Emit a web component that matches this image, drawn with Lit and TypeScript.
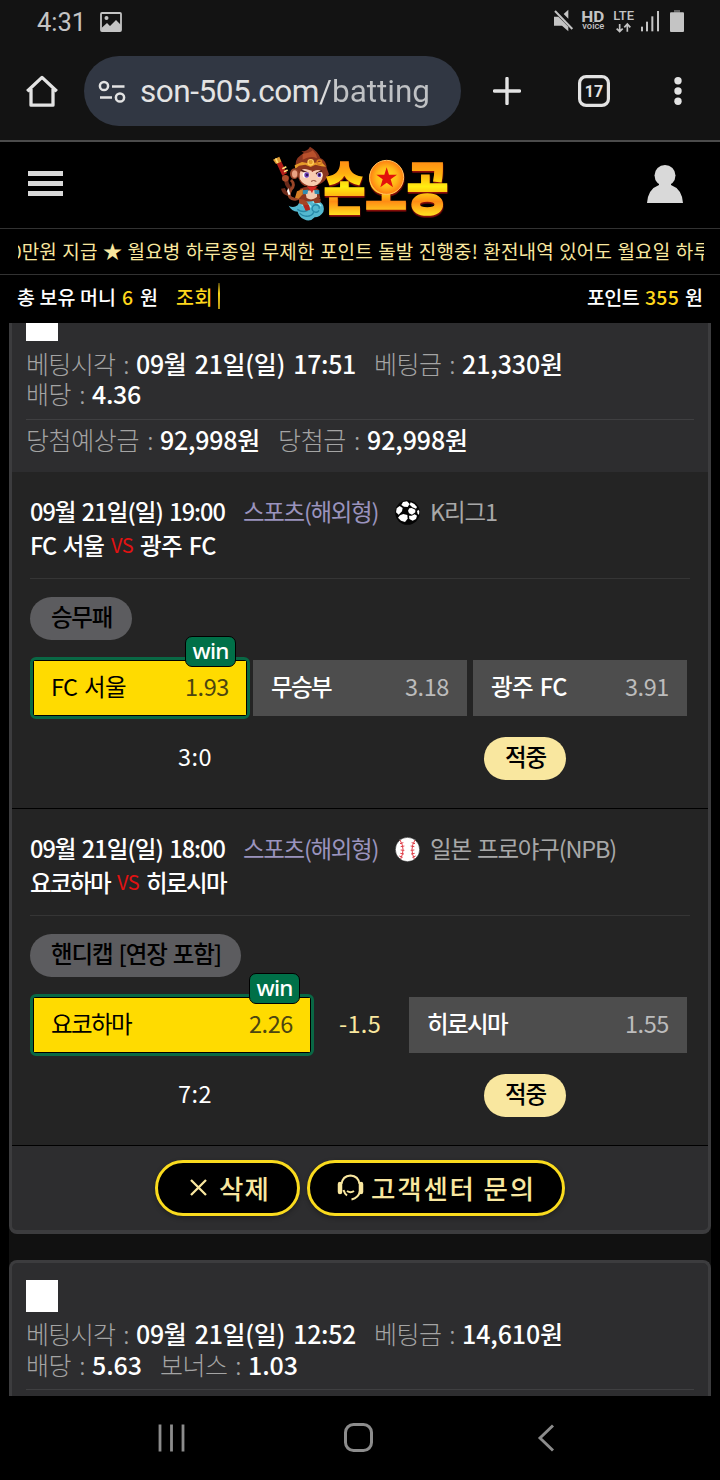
import { LitElement, html, css, svg } from "lit";
import { customElement, property } from "lit/decorators.js";

/** Text run whose tracking is tuned so that it fills a given measure. */
@customElement("fit-text")
class FitText extends LitElement {
  @property({ type: Number }) w = 0;
  @property() text = "";
  static styles = css`
    :host { display: block; flex: none; white-space: pre; }
    span { display: inline-block; }
  `;
  render() {
    return html`<span>${this.text}</span>`;
  }
  updated() {
    const span = this.renderRoot.querySelector("span") as HTMLElement;
    span.style.letterSpacing = "0px";
    const natural = span.getBoundingClientRect().width;
    span.style.letterSpacing = `${(this.w - natural) / this.text.length}px`;
    this.style.width = `${this.w}px`;
  }
}

type Run = [string, number];
const run = (r: Run, cls = "") => html`<fit-text class=${cls} .text=${r[0]} .w=${r[1]}></fit-text>`;

interface Field { label: Run; value: Run }
interface Pick { name: Run; odds: string; win?: boolean }
interface Match {
  date: Run; kind: Run; sport: "soccer" | "baseball"; league: Run;
  home: Run; away: Run; market: Run; picks: (Pick | string)[]; score: string;
}

const soccer = svg`<svg width="25" height="25" viewBox="0 0 75 75">
  <circle cx="37.500" cy="37.500" r="37" fill="#050505"/>
  <path d="M24 6L36 4L44 12L38 21L27 20L19 15Z" fill="#fff"/>
  <path d="M47 7L58 12L66 21L63 26L52 22L44 14Z" fill="#fff"/>
  <path d="M5 25L14 18L23 24L21 34L11 44L3 37Z" fill="#fff"/>
  <path d="M43 25L50 24L61 29L61 37L51 44L42 40L39 32Z" fill="#fff"/>
  <path d="M15 46L25 42L37 45L38 56L30 66L18 62L9 53Z" fill="#fff"/>
  <path d="M42 47L50 47L59 43L66 47L63 57L53 62L43 57Z" fill="#fff"/>
  <path d="M70 29L73 34L72 44L68 42L66 34Z" fill="#fff"/>
</svg>`;

const baseball = svg`<svg width="25" height="25" viewBox="0 0 75 75">
  <circle cx="37.500" cy="37.500" r="36.500" fill="#fff" stroke="#111" stroke-width="1.500"/>
  <g fill="none" stroke="#e0404a" stroke-width="3">
    <path d="M15 9Q32 36 17 66"/><path d="M60 9Q43 36 58 66"/>
    <path d="M15 20L25 17M17 29L28 27M17 39L28 40M16 49L27 51M13 57L23 61"/>
    <path d="M60 20L50 17M58 29L47 27M58 39L47 40M59 49L48 51M62 57L52 61"/>
  </g>
</svg>`;

const logo = svg`<svg class="logo" width="180" height="80" viewBox="30 15 540 240">
  <defs>
    <linearGradient id="fire" x1="0" y1="60" x2="0" y2="226" gradientUnits="userSpaceOnUse">
      <stop offset="0" stop-color="#ff8a14"/><stop offset=".25" stop-color="#ffae10"/>
      <stop offset=".48" stop-color="#ffee10"/><stop offset=".62" stop-color="#ffc010"/>
      <stop offset=".75" stop-color="#ff8c14"/><stop offset="1" stop-color="#ffe020"/>
    </linearGradient>
    <radialGradient id="sun"><stop offset="0" stop-color="#ffe81a"/><stop offset=".6" stop-color="#ffb818"/><stop offset="1" stop-color="#ff7d12"/></radialGradient>
  </defs>
  <!-- cloud -->
  <path d="M86 197Q100 205 113 196Q120 180 142 183Q165 174 181 186Q196 197 190 216Q180 232 164 232Q150 248 132 238Q116 230 113 215Q94 213 86 197Z" fill="#54b8cf"/>
  <path d="M112 208Q128 219 143 211M137 229Q156 230 161 217M177 211A11 11 0 1 1 171 195Q180 198 177 206M119 220Q129 230 140 228" fill="none" stroke="#2689a8" stroke-width="4"/>
  <path d="M125 196Q145 186 153 202M158 186Q177 186 183 199" fill="none" stroke="#a0edf4" stroke-width="4"/>
  <!-- staff, tail and arm -->
  <path d="M45 60L60 57L81 99L67 107Z" fill="#b21c18"/><path d="M39 59L58 50L64 65L48 72Z" fill="#df9a32"/>
  <path d="M47 55L53 69M67 86L79 80M72 95L83 90" stroke="#ffe17a" stroke-width="5"/>
  <path d="M82 108Q75 126 85 139Q95 151 82 161Q72 158 69 145" fill="none" stroke="#6b2a1a" stroke-width="12"/>
  <path d="M93 120Q108 134 92 150Q80 172 101 177Q112 179 118 171" fill="none" stroke="#994527" stroke-width="9"/>
  <circle cx="76" cy="115" r="10" fill="#a94b29"/>
  <path d="M85 144L91 163L86 166L81 153Z" fill="#fff"/>
  <!-- body -->
  <path d="M120 146Q144 134 175 147L181 175Q160 188 128 183L114 170Z" fill="#8b361f"/>
  <path d="M111 154L129 147L128 163L116 176L105 173Z" fill="#d58025"/>
  <path d="M135 152L171 150L171 171Q155 184 140 174Z" fill="#f2c9ae"/>
  <path d="M128 151L145 149L142 162L129 163ZM163 150L178 151L178 163L164 161Z" fill="#318db1"/>
  <path d="M140 139L174 139L160 150L156 160L150 149Z" fill="#d92722"/>
  <path d="M117 176Q145 175 149 207L137 210L129 194L117 190Z" fill="#a64424"/>
  <path d="M130 196L147 195L150 210L137 212Z" fill="#b4241c"/>
  <path d="M158 178L182 176L181 188L164 190Z" fill="#913a20"/>
  <!-- head -->
  <path d="M109 91Q100 60 122 46L132 39L124 34Q143 34 150 20Q174 34 181 54Q199 62 200 84L207 103L194 122Q170 144 134 138Q116 131 109 91Z" fill="#8a351e"/>
  <path d="M128 41Q150 40 158 31Q170 42 171 55Q151 45 128 59Z" fill="#b9502b"/>
  <ellipse cx="103" cy="101" rx="13" ry="16" fill="#9b482c"/><ellipse cx="104" cy="102" rx="8" ry="11" fill="#e9a384"/>
  <path d="M119 101Q123 81 145 89L160 94Q184 82 189 105Q186 132 161 138Q130 139 119 116Z" fill="#f8cdb1"/>
  <path d="M104 76L126 66L142 69L152 60L164 68L183 65L198 80L185 79L166 74L152 81L136 74L117 77L106 86Z" fill="#e69c2a"/>
  <circle cx="152" cy="67" r="8" fill="none" stroke="#ffce59" stroke-width="4"/><circle cx="178" cy="67" r="7" fill="none" stroke="#d67b20" stroke-width="4"/>
  <path d="M123 91L145 100M186 92L168 101" stroke="#54201b" stroke-width="5"/>
  <ellipse cx="138" cy="105" rx="10" ry="9" fill="#fff"/><ellipse cx="140" cy="105" rx="7" ry="8" fill="#6d3cae"/><circle cx="141" cy="105" r="3" fill="#1a1136"/>
  <ellipse cx="179" cy="105" rx="8" ry="8" fill="#fff"/><ellipse cx="178" cy="105" rx="6" ry="7" fill="#6d3cae"/><circle cx="178" cy="105" r="3" fill="#1a1136"/>
  <path d="M153 124Q161 119 169 124" fill="none" stroke="#8e4334" stroke-width="3"/><circle cx="157" cy="94" r="2" fill="#9b2722"/>
  <!-- wordmark -->
  <g class="word">
    <text x="191" y="206" font-size="170" textLength="374" lengthAdjust="spacingAndGlyphs" fill="url(#fire)" stroke="url(#fire)" stroke-width="5">손오공</text>
    <circle cx="380" cy="112" r="51" fill="url(#sun)" stroke="#ffc35d" stroke-width="3"/>
  </g>
  <path d="M380 82L387 104L411 104L392 118L399 142L380 128L361 142L368 118L349 104L373 104Z" fill="#e3120b"/>
</svg>`;

const statusIcons = svg`<svg width="134" height="26" viewBox="579 24 402 78">
  <g fill="#c4c4c4">
    <path d="M582 50H595L612 67L625 80V94L606 77H582ZM611 42L625 29V56Z"/>
    <path d="M585 33L637 87" stroke="#c4c4c4" stroke-width="6"/>
    <g font-family="Roboto, sans-serif">
      <text x="664" y="66" font-size="44" font-weight="700" textLength="69" lengthAdjust="spacingAndGlyphs">HD</text>
      <text x="667" y="88" font-size="25" font-weight="500" textLength="66" lengthAdjust="spacingAndGlyphs">voice</text>
      <text x="760" y="60" font-size="40" font-weight="500" textLength="62" lengthAdjust="spacingAndGlyphs">LTE</text>
    </g>
    <rect x="843" y="80" width="6" height="14"/><rect x="858" y="65" width="6" height="29"/>
    <rect x="874" y="49" width="6" height="45"/><rect x="891" y="33" width="6" height="61"/>
    <rect x="942" y="30" width="18" height="8" fill="#636363"/><rect x="930" y="37" width="42" height="59" rx="3"/>
  </g>
  <path d="M779 72V94M770 86L779 95L788 86M802 95V74M793 82L802 72L811 82" fill="none" stroke="#c4c4c4" stroke-width="5"/>
</svg>`;

const headset = svg`<svg width="27" height="27" viewBox="0 0 27 27" fill="none" stroke="#f9e79f" stroke-width="2">
  <path d="M4.500 10Q5.500 2 13.500 1.500Q21.500 2 22.500 10M23 17Q21.500 24 14.500 25.500"/>
  <path d="M3 10V18M24 10V18" stroke-width="4.500" stroke-linecap="round"/>
  <path d="M10 17Q13.500 19.500 17 17M6.500 16Q7.500 19.500 10 21.500"/>
</svg>`;

const when = (time: string): Run => [`09월 21일(일) ${time}`, 220];

const slip1: Field[][] = [
  [{ label: ["베팅시각 :", 103], value: when("17:51") }, { label: ["베팅금 :", 81], value: ["21,330원", 101] }],
  [{ label: ["배당 :", 59], value: ["4.36", 49] }],
  [{ label: ["당첨예상금 :", 127], value: ["92,998원", 100] }, { label: ["당첨금 :", 82], value: ["92,998원", 101] }],
];
const slip2: Field[][] = [
  [{ label: ["베팅시각 :", 103], value: when("12:52") }, { label: ["베팅금 :", 81], value: ["14,610원", 101] }],
  [{ label: ["배당 :", 59], value: ["5.63", 50] }, { label: ["보너스 :", 81], value: ["1.03", 50] }],
];

const matches: Match[] = [
  {
    date: ["09월 21일(일) 19:00", 195], kind: ["스포츠(해외형)", 135], sport: "soccer", league: ["K리그1", 67],
    home: ["FC 서울", 74], away: ["광주 FC", 76], market: ["승무패", 61],
    picks: [
      { name: ["FC 서울", 75], odds: "1.93", win: true },
      { name: ["무승부", 60], odds: "3.18" },
      { name: ["광주 FC", 76], odds: "3.91" },
    ],
    score: "3:0",
  },
  {
    date: ["09월 21일(일) 18:00", 195], kind: ["스포츠(해외형)", 135], sport: "baseball", league: ["일본 프로야구(NPB)", 186],
    home: ["요코하마", 80], away: ["히로시마", 80], market: ["핸디캡 [연장 포함]", 170],
    picks: [
      { name: ["요코하마", 80], odds: "2.26", win: true },
      "-1.5",
      { name: ["히로시마", 80], odds: "1.55" },
    ],
    score: "7:2",
  },
];

@customElement("app-root")
class AppRoot extends LitElement {
  static styles = css`
    :host { display: flex; flex-direction: column; width: 720px; height: 1480px; overflow: hidden; background: #000; color: #fff;
      font-family: "Noto Sans CJK KR", "Noto Sans", sans-serif; }
    * { box-sizing: border-box; }
    svg { display: block; flex: none; }
    .status { height: 43px; flex: none; background: #131313; display: flex; align-items: center; padding: 0 33px 0 37px;
      font: 25.500px/43px Roboto, sans-serif; color: #c4c4c4; }
    .status fit-text { padding-top: 1px; }
    .status .photo { margin-left: 14px; }
    .status .right { margin-left: auto; padding-bottom: 1px; }
    .browser { height: 99px; flex: none; background: #131313; border-bottom: 2px solid #4b4b4b; display: flex; align-items: center;
      padding: 0 0 1px 26px; }
    .url { width: 377px; height: 70px; margin: 0 32px 0 26px; border-radius: 35px; background: #313743; display: flex; align-items: center;
      padding-left: 14px; font: 31.500px/71px Roboto, sans-serif; color: #e3e3e3; }
    .url svg { margin-right: 14px; }
    .path { background: linear-gradient(90deg, #e3e3e3, #bfc1c4 20px); -webkit-background-clip: text; background-clip: text; color: transparent; }
    .tab { margin: 0 64px 0 57px; }
    .header { height: 86px; flex: none; display: flex; align-items: center; padding: 0 37px 0 28px; }
    .menu { width: 35px; display: grid; gap: 4.500px; padding-bottom: 3px; }
    .menu i { height: 5.500px; background: #d9d9d9; }
    .logo { margin: 0 auto 0 207px; overflow: visible; font-family: "Noto Sans CJK KR", sans-serif; font-weight: 900; }
    .word { filter: drop-shadow(1px 5px 0 #8f0d0a); }
    .user { margin-bottom: 2px; }
    .notice { height: 47px; flex: none; border: solid #323232; border-width: 1px 0; display: flex; align-items: center; padding: 0 16px 0 18px; }
    .clip { flex: 1; min-width: 0; overflow: hidden; display: flex; color: #f9e79f; font-size: 19px; line-height: 42px; padding-bottom: 2px; word-spacing: 1px; }
    .clip fit-text { margin-left: -7px; }
    .money { height: 48px; flex: none; display: flex; align-items: center; padding: 0 17px 4px 17px; font-size: 19.500px; font-weight: 500; line-height: 30px; }
    .gold { color: #ffd71c; }
    .money .num { margin: 0 6px; }
    .money .look { margin-left: 18px; }
    .bar { width: 2px; height: 26px; margin: 0 0 3px 5px; background: linear-gradient(#4b3f08, #f5cf18 40%, #b39513); }
    .points { margin-left: auto; display: flex; }
    .scroll { height: 1073px; flex: none; margin: 0 9px; overflow: hidden; background: #111; }
    .card { border: 3px solid #3c3c3e; background: #2d2d2f; border-bottom-width: 4px; }
    .card.first { border-top: 0; border-radius: 0 0 8px 8px; height: 911px; }
    .card.next { margin-top: 26px; border-radius: 8px 8px 0 0; border-bottom: 0; height: 140px; }
    .head { padding: 0 14px; }
    .card.first .head { height: 149px; }
    .box { width: 32px; height: 18px; background: #fff; }
    .next .box { height: 32px; margin-top: 17px; }
    .rows { padding: 6px 0 10px; height: 78px; border-bottom: 1px solid #3f3f41; }
    .first .rows { padding-top: 7px; height: 79px; }
    .first .rows .line { height: 30px; }
    .line { display: flex; gap: 18px; height: 30.500px; line-height: 30.500px; font-size: 25px; word-spacing: 3px; }
    .total { padding-top: 4px; }
    .field { display: flex; gap: 7px; }
    .label { color: #a4a4a4; font-weight: 300; }
    .value { font-weight: 500; }
    .match { height: 337px; background: #242424; border-bottom: 1px solid #000; padding: 22px 18px 0; font-size: 23.500px; word-spacing: 2px; }
    .info { display: flex; height: 34px; line-height: 34px; align-items: center; }
    .info svg { margin-top: 3px; }
    .strong { font-weight: 500; }
    .kind { margin: 0 17px 0 18px; color: #9a93bd; }
    .league { margin-left: 10px; color: #a8a8a8; }
    .vs { margin: 0 7px; color: #e11212; font-size: 20px; }
    .rule { height: 1px; margin: 16px 0 18px; background: #353535; }
    .pill { display: inline-flex; height: 43px; line-height: 39px; border-radius: 22px; padding: 0 20px 0 21px; background: #5c5c5f; color: #000; font-weight: 500; }
    .picks { display: grid; grid-template-columns: repeat(3, 1fr); gap: 6px; margin: 20px 3px 21px; height: 56px; }
    .picks.handicap { grid-template-columns: 278px 1fr 278px; gap: 0; }
    .pick { position: relative; display: flex; justify-content: space-between; background: #4d4d4d; line-height: 53px; padding: 0 18px; }
    .odds { color: #bcbcbc; }
    .pick.win { margin: -3px; border: 3px solid #096845; border-radius: 6px; background: #000; padding: 1px; }
    .win .face { flex: 1; display: flex; justify-content: space-between; background: #ffdb00; color: #000; padding: 0 17px; line-height: 51px; }
    .win .strong { font-weight: 400; }
    .win .odds { color: #4c4510; }
    .flag { position: absolute; right: 11px; top: -24px; width: 51px; height: 31px; border: 1px solid #000; border-radius: 7px; background: #007048;
      color: #fff; font: 500 22.500px/28px "Noto Sans", sans-serif; display: flex; justify-content: center; }
    .line15 { color: #f9e79f; line-height: 53px; display: flex; justify-content: center; }
    .result { display: grid; grid-template-columns: 1fr 1fr; justify-items: center; line-height: 39px; }
    .hit { background: #f9e79f; }
    .foot { display: flex; justify-content: center; gap: 7px; padding-top: 14px; }
    .btn { height: 56px; border: 3px solid #fadb1e; border-radius: 28px; background: #000; color: #f9e79f; display: flex; align-items: center;
      font-size: 26.500px; font-weight: 500; line-height: 46px; padding-bottom: 1px; box-shadow: 0 2px 5px rgba(0,0,0,.3); }
    .del { width: 145px; padding-left: 32px; }
    .del svg { margin-right: 12px; }
    .ask { width: 258px; padding-left: 27px; }
    .ask svg { margin-right: 7px; }
    .nav { flex: 1; display: flex; align-items: center; padding: 0 0 1px 158px; }
    .nav .h { margin: 0 164px 0 159px; }
  `;

  private line(fields: Field[]) {
    return html`<div class="line">${fields.map((f) => html`<div class="field">${run(f.label, "label")}${run(f.value, "value")}</div>`)}</div>`;
  }

  private pick(p: Pick | string) {
    if (typeof p === "string") return html`<div class="line15">${run([p, 42])}</div>`;
    const body = html`${run(p.name, "strong")}${run([p.odds, 44], "odds")}`;
    return p.win
      ? html`<div class="pick win"><div class="face">${body}</div><div class="flag">${run(["win", 36])}</div></div>`
      : html`<div class="pick">${body}</div>`;
  }

  private match(m: Match) {
    return html`<section class="match">
      <div class="info">${run(m.date, "strong")}${run(m.kind, "kind")}${m.sport === "soccer" ? soccer : baseball}${run(m.league, "league")}</div>
      <div class="info">${run(m.home, "strong")}${run(["VS", 22], "vs")}${run(m.away, "strong")}</div>
      <div class="rule"></div>
      <div class="pill">${run(m.market)}</div>
      <div class="picks ${m.picks.some((p) => typeof p === "string") ? "handicap" : ""}">${m.picks.map((p) => this.pick(p))}</div>
      <div class="result">${run([m.score, 34])}<div class="pill hit">${run(["적중", 41])}</div></div>
    </section>`;
  }

  render() {
    return html`
      <div class="status">
        ${run(["4:31", 49])}
        <svg class="photo" width="22" height="20" viewBox="0 0 22 20"><rect x="1" y="1" width="20" height="18" rx="1" fill="none" stroke="#c4c4c4" stroke-width="1.800"/><circle cx="6.500" cy="6" r="2" fill="#c4c4c4"/><path d="M1.500 16L7 11L10 14L16 8L21 13V19H1.500Z" fill="#c4c4c4"/></svg>
        <div class="right">${statusIcons}</div>
      </div>
      <div class="browser">
        <svg width="32" height="32" viewBox="0 0 32 32" fill="none" stroke="#e3e3e3" stroke-width="3.300" stroke-linejoin="round"><path d="M1.200 16.200L16 2.400L30.800 16.200M5 14V30.200H27V14"/></svg>
        <div class="url">
          <svg width="28" height="23" viewBox="0 0 28 23" fill="none" stroke="#e3e3e3" stroke-width="2.500"><circle cx="6" cy="6" r="4.100"/><circle cx="22" cy="17.500" r="4.100"/><path d="M14 6.500H26.500M2 17.500H14"/></svg>
          ${run(["son-505.com", 179])}<div class="path">${run(["/batting", 111])}</div>
        </div>
        <svg width="28" height="28" viewBox="0 0 28 28"><path d="M14 1.500V26.500M1.500 14H26.500" stroke="#e3e3e3" stroke-width="3.400" stroke-linecap="round"/></svg>
        <svg class="tab" width="32" height="32" viewBox="0 0 32 32"><rect x="1.600" y="1.600" width="28.800" height="28.800" rx="6.500" fill="none" stroke="#e3e3e3" stroke-width="3.200"/><text x="16" y="21.500" text-anchor="middle" font-family="Roboto, sans-serif" font-weight="700" font-size="16" fill="#e3e3e3">17</text></svg>
        <svg width="8" height="28" viewBox="0 0 8 28" fill="#e3e3e3"><circle cx="4" cy="3.700" r="3.700"/><circle cx="4" cy="14" r="3.700"/><circle cx="4" cy="24.300" r="3.700"/></svg>
      </div>
      <div class="header">
        <div class="menu"><i></i><i></i><i></i></div>
        ${logo}
        <svg class="user" width="36" height="38" viewBox="0 0 36 38" fill="#d9d9d9"><circle cx="18" cy="10.500" r="10.500"/><path d="M12 16H24V20Q35 24 36 38H0Q1 24 12 20Z"/></svg>
      </div>
      <div class="notice"><div class="clip">${run(["0만원 지급 ★ 월요병 하루종일 무제한 포인트 돌발 진행중! 환전내역 있어도 월요일 하루", 700])}</div></div>
      <div class="money">
        ${run(["총 보유 머니", 99])}${run(["6", 12], "gold num")}${run(["원", 18])}${run(["조회", 37], "gold look")}<div class="bar"></div>
        <div class="points">${run(["포인트", 52])}${run(["355", 34], "gold num")}${run(["원", 18])}</div>
      </div>
      <div class="scroll">
        <article class="card first">
          <div class="head">
            <div class="box"></div>
            <div class="rows">${this.line(slip1[0])}${this.line(slip1[1])}</div>
            <div class="total">${this.line(slip1[2])}</div>
          </div>
          ${matches.map((m) => this.match(m))}
          <div class="foot">
            <div class="btn del"><svg width="17" height="17" viewBox="0 0 17 17"><path d="M1 1L16 16M16 1L1 16" stroke="#f9e79f" stroke-width="2.300"/></svg>${run(["삭제", 51])}</div>
            <div class="btn ask">${headset}${run(["고객센터 문의", 165])}</div>
          </div>
        </article>
        <article class="card next">
          <div class="head">
            <div class="box"></div>
            <div class="rows">${slip2.map((l) => this.line(l))}</div>
          </div>
        </article>
      </div>
      <div class="nav">
        <svg width="27" height="28" viewBox="0 0 27 28" stroke="#8c8c8c" stroke-width="2.800"><path d="M2 0.500V27.500M13.500 0.500V27.500M25 0.500V27.500"/></svg>
        <svg class="h" width="29" height="29" viewBox="0 0 29 29"><rect x="1.500" y="1.500" width="26" height="26" rx="8" fill="none" stroke="#8c8c8c" stroke-width="3"/></svg>
        <svg width="18" height="28" viewBox="0 0 18 28" fill="none" stroke="#8c8c8c" stroke-width="2.900"><path d="M16 1.500L3 14L16 26.500"/></svg>
      </div>
    `;
  }
}
